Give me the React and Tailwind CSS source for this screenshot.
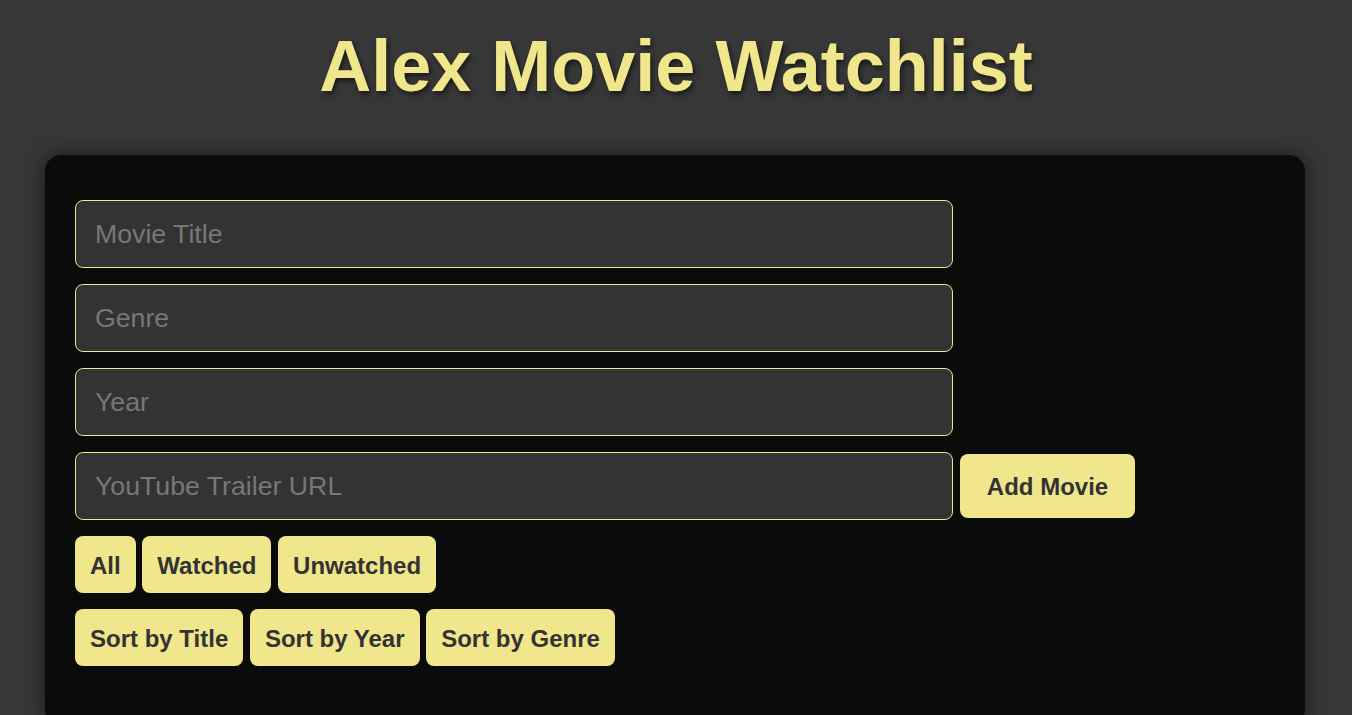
import { useState } from "react"

const inputCls =
  "w-[878px] h-[68px] px-[19px] pt-[2px] bg-[#333333] border border-[#f0e68c] rounded-[8px] text-[26.7px] text-[#eeeeee] placeholder:text-[#777777] outline-none"

const btnCls =
  "bg-[#f0e68c] text-[#333333] font-bold text-[24px] rounded-[8px] px-[15px] pt-[4px] h-[57px] leading-none"

const App = () => {
  const [title, setTitle] = useState("")
  const [genre, setGenre] = useState("")
  const [year, setYear] = useState("")
  const [trailer, setTrailer] = useState("")

  return (
    <div className="min-h-screen bg-[#373737] pt-[25px] font-['Liberation_Sans',Arial,sans-serif] overflow-hidden">
      <h1 className="text-center text-[72px] leading-[1.15] font-bold text-[#f0e68c] mb-[47px] [text-shadow:2px_3px_5px_rgba(0,0,0,0.55)]">
        Alex Movie Watchlist
      </h1>

      <div className="w-[1260px] ml-[45px] bg-[#0b0b0b] rounded-[16px] shadow-[0_0_20px_rgba(0,0,0,0.55)] pt-[45px] px-[30px] pb-[60px]">
        <div className="flex flex-col gap-[16px]">
          <input className={inputCls} placeholder="Movie Title" value={title} onChange={(e) => setTitle(e.target.value)} />
          <input className={inputCls} placeholder="Genre" value={genre} onChange={(e) => setGenre(e.target.value)} />
          <input className={inputCls} placeholder="Year" value={year} onChange={(e) => setYear(e.target.value)} />
          <div className="flex items-center gap-[7px]">
            <input className={inputCls} placeholder="YouTube Trailer URL" value={trailer} onChange={(e) => setTrailer(e.target.value)} />
            <button className="bg-[#f0e68c] text-[#333333] font-bold text-[24px] rounded-[8px] w-[175px] h-[64px] pt-[2px] mt-[1px] leading-none">
              Add Movie
            </button>
          </div>
        </div>

        <div className="flex gap-[6.67px] mt-[16px]">
          <button className={btnCls}>All</button>
          <button className={btnCls}>Watched</button>
          <button className={btnCls}>Unwatched</button>
        </div>

        <div className="flex gap-[6.67px] mt-[16px]">
          <button className={btnCls}>Sort by Title</button>
          <button className={btnCls}>Sort by Year</button>
          <button className={btnCls}>Sort by Genre</button>
        </div>
      </div>
    </div>
  )
}

export default App
